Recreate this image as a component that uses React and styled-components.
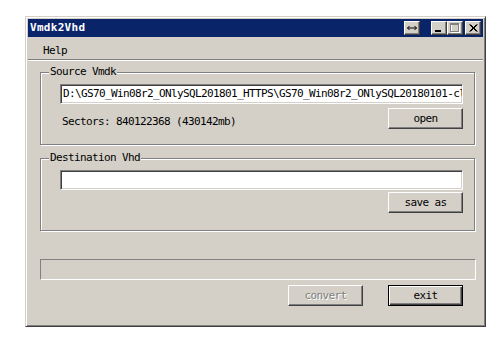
import React from 'react';
import styled, { createGlobalStyle, css } from 'styled-components';

const Global = createGlobalStyle`
  body {
    margin: 0;
    background: #fff;
    font-family: "DejaVu Sans Mono", "Liberation Mono", monospace;
    font-size: 11px;
    letter-spacing: -0.62px;
    color: #000;
  }
`;

const Window = styled.div`
  width: 461px;
  height: 311px;
  margin: 16px 0 0 25px;
  box-sizing: border-box;
  background: #d4d0c8;
  border: 1px solid;
  border-color: #d4d0c8 #404040 #404040 #d4d0c8;
  box-shadow: inset 1px 1px 0 #fff, inset -1px -1px 0 #808080;
  padding: 2px;
  display: flex;
  flex-direction: column;
`;

const TitleBar = styled.div`
  height: 18px;
  background: #0a246a;
  display: flex;
  align-items: center;
  padding: 0 2px 0 2px;
`;

const Title = styled.div`
  flex: 1;
  color: #fff;
  font-weight: bold;
  letter-spacing: 0.3px;
  line-height: 14px;
`;

const CaptionButton = styled.div`
  width: 16px;
  height: 14px;
  box-sizing: border-box;
  background: #d4d0c8;
  border: 1px solid;
  border-color: #fff #404040 #404040 #fff;
  box-shadow: inset -1px -1px 0 #808080;
  display: flex;
  align-items: center;
  justify-content: center;
  margin-left: ${(p) => p.$gap || 0}px;
`;

const MenuBar = styled.div`
  height: 23px;
  box-sizing: border-box;
  padding: 5px 0 0 9px;
  border-bottom: 1px solid #808080;
  display: flex;
`;

const MenuItem = styled.div`
  padding: 0 6px;
  line-height: 17px;
`;

const Client = styled.div`
  flex: 1;
  border-top: 1px solid #fff;
  padding: 0 8px 0 12px;
  display: flex;
  flex-direction: column;
`;

const GroupBox = styled.div`
  position: relative;
  height: 73px;
  box-sizing: border-box;
  margin-top: ${(p) => p.$top}px;
  border: 1px solid #808080;
  box-shadow: 1px 1px 0 #fff, inset 1px 1px 0 #fff;
  padding: 11px 11px 0 19px;
  display: flex;
  flex-direction: column;
`;

const Legend = styled.span`
  position: absolute;
  top: -8px;
  left: 8px;
  padding: 0 1px;
  background: #d4d0c8;
  line-height: 14px;
`;

const TextField = styled.div`
  height: 20px;
  box-sizing: border-box;
  background: #fff;
  border: 1px solid;
  border-color: #808080 #fff #fff #808080;
  box-shadow: inset 1px 1px 0 #404040, inset -1px -1px 0 #d4d0c8;
  padding: 0 2px;
  line-height: 18px;
  overflow: hidden;
  white-space: nowrap;
`;

const Row = styled.div`
  display: flex;
  justify-content: ${(p) => p.$justify || 'space-between'};
  margin-top: ${(p) => p.$gap}px;
`;

const Info = styled.div`
  padding: 7px 0 0 2px;
  line-height: 14px;
`;

const Button = styled.div`
  width: 75px;
  height: 21px;
  box-sizing: border-box;
  display: flex;
  align-items: center;
  justify-content: center;
  background: #d4d0c8;
  border: 1px solid;
  border-color: #fff #404040 #404040 #fff;
  box-shadow: inset -1px -1px 0 #808080;
  ${(p) =>
    p.$default &&
    css`
      border-color: #000;
      box-shadow: inset 1px 1px 0 #fff, inset -1px -1px 0 #404040, inset -2px -2px 0 #808080;
    `}
  ${(p) =>
    p.$disabled &&
    css`
      color: #808080;
      text-shadow: 1px 1px 0 #fff;
    `}
`;

const Progress = styled.div`
  width: 436px;
  height: 21px;
  box-sizing: border-box;
  margin-top: 28px;
  border: 1px solid;
  border-color: #808080 #fff #fff #808080;
`;

const ButtonRow = styled.div`
  display: flex;
  justify-content: flex-end;
  gap: 25px;
  margin-top: 5px;
  padding-right: 12px;
`;

const MinIcon = () => (
  <svg width="8" height="8" viewBox="0 0 8 8">
    <rect x="0" y="6" width="6" height="2" fill="#000" />
  </svg>
);

const MaxIcon = () => (
  <svg width="10" height="10" viewBox="0 0 10 10">
    <rect x="1.5" y="1.5" width="8" height="8" fill="none" stroke="#fff" />
    <rect x="0.5" y="0.5" width="8" height="8" fill="none" stroke="#808080" />
    <rect x="0.5" y="1" width="8" height="1" fill="#808080" />
  </svg>
);

const CloseIcon = () => (
  <svg width="9" height="8" viewBox="0 0 9 8">
    <path d="M0.5 0.5 L7.5 7.5 M1.5 0.5 L8.5 7.5 M7.5 0.5 L0.5 7.5 M8.5 0.5 L1.5 7.5" stroke="#000" strokeWidth="1" />
  </svg>
);

const ResizeIcon = () => (
  <svg width="10" height="6" viewBox="0 0 10 6">
    <path d="M0.5 3 H9.5 M0.5 3 L2.5 1 M0.5 3 L2.5 5 M9.5 3 L7.5 1 M9.5 3 L7.5 5" stroke="#000" strokeWidth="1" fill="none" />
  </svg>
);

export default function App() {
  return (
    <>
      <Global />
      <Window>
        <TitleBar>
          <Title>Vmdk2Vhd</Title>
          <CaptionButton><ResizeIcon /></CaptionButton>
          <CaptionButton $gap={11}><MinIcon /></CaptionButton>
          <CaptionButton><MaxIcon /></CaptionButton>
          <CaptionButton $gap={2}><CloseIcon /></CaptionButton>
        </TitleBar>
        <MenuBar>
          <MenuItem>Help</MenuItem>
        </MenuBar>
        <Client>
          <GroupBox $top={11}>
            <Legend>Source Vmdk</Legend>
            <TextField>D:\GS70_Win08r2_ONlySQL201801_HTTPS\GS70_Win08r2_ONlySQL20180101-cl.vmdk</TextField>
            <Row $gap={4}>
              <Info>Sectors: 840122368 (430142mb)</Info>
              <Button>open</Button>
            </Row>
          </GroupBox>
          <GroupBox $top={13}>
            <Legend>Destination Vhd</Legend>
            <TextField />
            <Row $gap={2} $justify="flex-end">
              <Button>save as</Button>
            </Row>
          </GroupBox>
          <Progress />
          <ButtonRow>
            <Button $disabled>convert</Button>
            <Button $default>exit</Button>
          </ButtonRow>
        </Client>
      </Window>
    </>
  );
}
